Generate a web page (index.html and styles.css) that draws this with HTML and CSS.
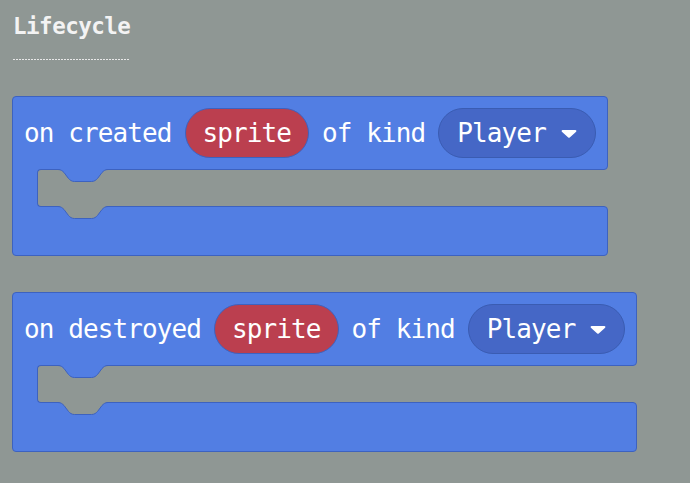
FILE: index.html
```html
<!DOCTYPE html>
<html>
<head>
<meta charset="utf-8">
<link rel="stylesheet" href="styles.css">
</head>
<body>
<div class="page">
  <div class="heading">
    <div class="heading-text">Lifecycle</div>
    <div class="heading-rule"></div>
  </div>

  <div class="block">
    <div class="block-top">
      <span class="label">on created</span>
      <span class="pill var">sprite</span>
      <span class="label">of kind</span>
      <span class="pill dropdown">Player
        <svg class="caret" width="16" height="10" viewBox="0 0 16 10"><path d="M1.6 1 H14.4 a1 1 0 0 1 0.75 1.65 L8.75 8.4 a1 1 0 0 1 -1.5 0 L0.85 2.65 A1 1 0 0 1 1.6 1 Z" fill="#fff"/></svg>
      </span>
    </div>
    <div class="mouth-row">
      <div class="mouth">
        <svg class="notch notch-top" width="52" height="14" viewBox="0 0 52 14"><path class="tab-fill-blue" d="M0 0 H52 V0.5 H51 c-3 0 -4.5 1.5 -6 3 l-4.5 6 c-1.5 1.5 -3 3 -6 3 h-17 c-3 0 -4.5 -1.5 -6 -3 l-4.5 -6 c-1.5 -1.5 -3 -3 -6 -3 H0 Z"/><path class="tab-line" d="M0 0.5 H1 c3 0 4.5 1.5 6 3 l4.5 6 c1.5 1.5 3 3 6 3 h17 c3 0 4.5 -1.5 6 -3 l4.5 -6 c1.5 -1.5 3 -3 6 -3 H52"/></svg>
        <svg class="notch notch-bottom" width="52" height="14" viewBox="0 0 52 14"><path class="tab-fill-gray" d="M0 0 H52 V0.5 H51 c-3 0 -4.5 1.5 -6 3 l-4.5 6 c-1.5 1.5 -3 3 -6 3 h-17 c-3 0 -4.5 -1.5 -6 -3 l-4.5 -6 c-1.5 -1.5 -3 -3 -6 -3 H0 Z"/><path class="tab-line" d="M0 0.5 H1 c3 0 4.5 1.5 6 3 l4.5 6 c1.5 1.5 3 3 6 3 h17 c3 0 4.5 -1.5 6 -3 l4.5 -6 c1.5 -1.5 3 -3 6 -3 H52"/></svg>
      </div>
    </div>
    <div class="block-bottom"></div>
  </div>

  <div class="block">
    <div class="block-top">
      <span class="label">on destroyed</span>
      <span class="pill var">sprite</span>
      <span class="label">of kind</span>
      <span class="pill dropdown">Player
        <svg class="caret" width="16" height="10" viewBox="0 0 16 10"><path d="M1.6 1 H14.4 a1 1 0 0 1 0.75 1.65 L8.75 8.4 a1 1 0 0 1 -1.5 0 L0.85 2.65 A1 1 0 0 1 1.6 1 Z" fill="#fff"/></svg>
      </span>
    </div>
    <div class="mouth-row">
      <div class="mouth">
        <svg class="notch notch-top" width="52" height="14" viewBox="0 0 52 14"><path class="tab-fill-blue" d="M0 0 H52 V0.5 H51 c-3 0 -4.5 1.5 -6 3 l-4.5 6 c-1.5 1.5 -3 3 -6 3 h-17 c-3 0 -4.5 -1.5 -6 -3 l-4.5 -6 c-1.5 -1.5 -3 -3 -6 -3 H0 Z"/><path class="tab-line" d="M0 0.5 H1 c3 0 4.5 1.5 6 3 l4.5 6 c1.5 1.5 3 3 6 3 h17 c3 0 4.5 -1.5 6 -3 l4.5 -6 c1.5 -1.5 3 -3 6 -3 H52"/></svg>
        <svg class="notch notch-bottom" width="52" height="14" viewBox="0 0 52 14"><path class="tab-fill-gray" d="M0 0 H52 V0.5 H51 c-3 0 -4.5 1.5 -6 3 l-4.5 6 c-1.5 1.5 -3 3 -6 3 h-17 c-3 0 -4.5 -1.5 -6 -3 l-4.5 -6 c-1.5 -1.5 -3 -3 -6 -3 H0 Z"/><path class="tab-line" d="M0 0.5 H1 c3 0 4.5 1.5 6 3 l4.5 6 c1.5 1.5 3 3 6 3 h17 c3 0 4.5 -1.5 6 -3 l4.5 -6 c1.5 -1.5 3 -3 6 -3 H52"/></svg>
      </div>
    </div>
    <div class="block-bottom"></div>
  </div>
</div>
</body>
</html>
```

FILE: styles.css
```css
html, body {
  margin: 0;
  padding: 0;
  background: #8f9794;
}

body {
  width: 690px;
  height: 483px;
  overflow: hidden;
  font-family: "DejaVu Sans Mono", "Liberation Mono", monospace;
}

.page {
  display: flex;
  flex-direction: column;
  align-items: flex-start;
  padding: 13px 0 0 12px;
  gap: 36px;
}

.heading {
  display: flex;
  flex-direction: column;
  align-items: flex-start;
  padding-left: 1px;
}

.heading-text {
  font-family: "DejaVu Sans Mono", monospace;
  font-weight: bold;
  font-size: 22.5px;
  letter-spacing: -0.5px;
  line-height: 26px;
  color: #f3f3f3;
}

.heading-rule {
  margin-top: 20px;
  width: 117px;
  height: 1px;
  background-image: linear-gradient(to right, #e8e8e8 0 2px, transparent 2px 3px);
  background-size: 3px 1px;
}

.block {
  display: inline-flex;
  flex-direction: column;
  align-items: stretch;
}

.block-top {
  display: flex;
  align-items: center;
  gap: 13px;
  padding: 11px;
  background: #527ee3;
  border: 1px solid #3d62bf;
  border-radius: 4px 4px 4px 0;
}

.label {
  color: #ffffff;
  font-size: 26px;
  letter-spacing: -0.9px;
  line-height: 30px;
  white-space: pre;
}

.pill {
  box-sizing: border-box;
  height: 50px;
  display: flex;
  align-items: center;
  border-radius: 25px;
  color: #ffffff;
  font-size: 26px;
  letter-spacing: -0.9px;
  line-height: 30px;
  white-space: nowrap;
}

.var {
  background: #bb3f4f;
  border: 1px solid #3d62bf;
  padding: 0 17px;
}

.dropdown {
  background: #4567c6;
  border: 1px solid #3a5cb2;
  padding: 0 18px;
  gap: 15px;
}

.caret {
  display: block;
  margin-top: 1px;
}

.mouth-row {
  position: relative;
  z-index: 1;
  display: flex;
  height: 38px;
  margin: -1px 0;
  padding-left: 24px;
  border-left: 1px solid #3d62bf;
  background: linear-gradient(to right, #527ee3 0 32px, transparent 32px);
}

.mouth {
  position: relative;
  flex: 1;
  margin-right: 4px;
  background: #8f9794;
  border: 1px solid #3d62bf;
  border-right: none;
  border-radius: 4px 0 0 4px;
}

.notch {
  position: absolute;
  left: 19px;
  overflow: visible;
}

.notch-top {
  top: -1px;
}

.notch-bottom {
  top: 36px;
}

.tab-fill-blue {
  fill: #527ee3;
}

.tab-fill-gray {
  fill: #8f9794;
}

.tab-line {
  fill: none;
  stroke: #3d62bf;
  stroke-width: 1;
}

.block-bottom {
  height: 50px;
  box-sizing: border-box;
  background: #527ee3;
  border: 1px solid #3d62bf;
  border-radius: 0 4px 4px 4px;
}
```
